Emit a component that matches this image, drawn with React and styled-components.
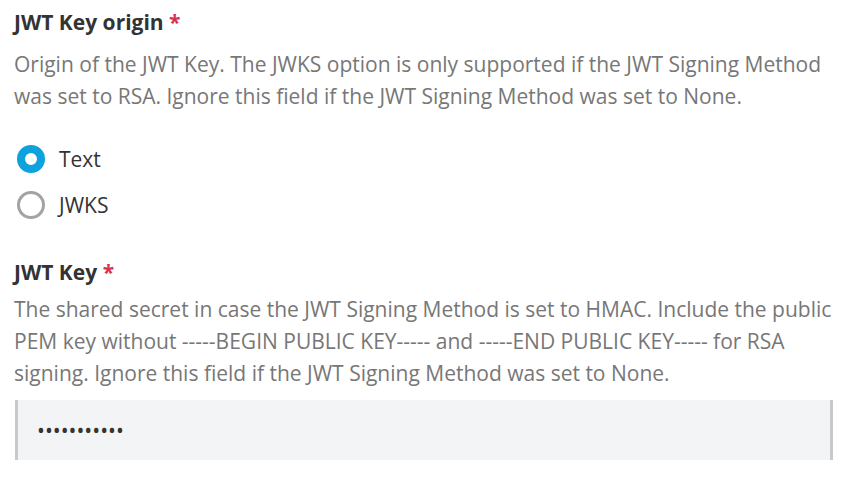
import styled, { createGlobalStyle } from "styled-components";

const GlobalStyle = createGlobalStyle`
  body {
    margin: 0;
    background: #fff;
    font-family: "Open Sans", "Noto Sans", sans-serif;
  }
`;

export default function App() {
  return (
    <>
      <GlobalStyle />
      <StyledPage>
        <StyledField>
          <StyledLabel>
            JWT Key origin <StyledRequired>*</StyledRequired>
          </StyledLabel>
          <StyledHelp $gap={11}>
            Origin of the JWT Key. The JWKS option is only supported if the JWT Signing Method
            <br />
            was set to RSA. Ignore this field if the JWT Signing Method was set to None.
          </StyledHelp>
          <StyledRadioGroup>
            <StyledOption>
              <StyledRadio $checked />
              Text
            </StyledOption>
            <StyledOption>
              <StyledRadio />
              JWKS
            </StyledOption>
          </StyledRadioGroup>
        </StyledField>

        <StyledField>
          <StyledLabel>
            JWT Key <StyledRequired>*</StyledRequired>
          </StyledLabel>
          <StyledHelp $gap={6}>
            The shared secret in case the JWT Signing Method is set to HMAC. Include the public
            <br />
            PEM key without -----BEGIN PUBLIC KEY----- and -----END PUBLIC KEY----- for RSA
            <br />
            signing. Ignore this field if the JWT Signing Method was set to None.
          </StyledHelp>
          <StyledSecret>•••••••••••</StyledSecret>
        </StyledField>
      </StyledPage>
    </>
  );
}

const StyledPage = styled.div`
  padding: 7px 14px 0 14px;
  display: flex;
  flex-direction: column;
  gap: 29px;
`;

const StyledField = styled.section`
  display: flex;
  flex-direction: column;
`;

const StyledLabel = styled.h3`
  margin: 0;
  font-size: 21px;
  line-height: 30px;
  font-weight: 700;
  color: #333;
`;

const StyledRequired = styled.span`
  color: #d9304f;
`;

const StyledHelp = styled.p`
  margin: ${(p) => p.$gap}px 0 0 0;
  font-size: 21px;
  line-height: 32px;
  color: #777;
  white-space: nowrap;
`;

const StyledRadioGroup = styled.div`
  display: flex;
  flex-direction: column;
  margin-top: 24px;
`;

const StyledOption = styled.label`
  display: flex;
  align-items: center;
  gap: 14px;
  height: 46px;
  padding-left: 3px;
  font-size: 21px;
  color: #333;
`;

const StyledRadio = styled.span`
  box-sizing: border-box;
  width: 28px;
  height: 28px;
  border-radius: 50%;
  background: #fff;
  border: ${(p) => (p.$checked ? "8px solid #0ba2de" : "3px solid #a3a3a3")};
`;

const StyledSecret = styled.div`
  box-sizing: border-box;
  margin: 11px 0 0 1px;
  height: 60px;
  display: flex;
  align-items: center;
  padding-left: 19px;
  background: #f3f4f6;
  border-left: 3px solid #c9c9c9;
  border-right: 3px solid #c9c9c9;
  font-size: 21px;
  color: #333;
`;
